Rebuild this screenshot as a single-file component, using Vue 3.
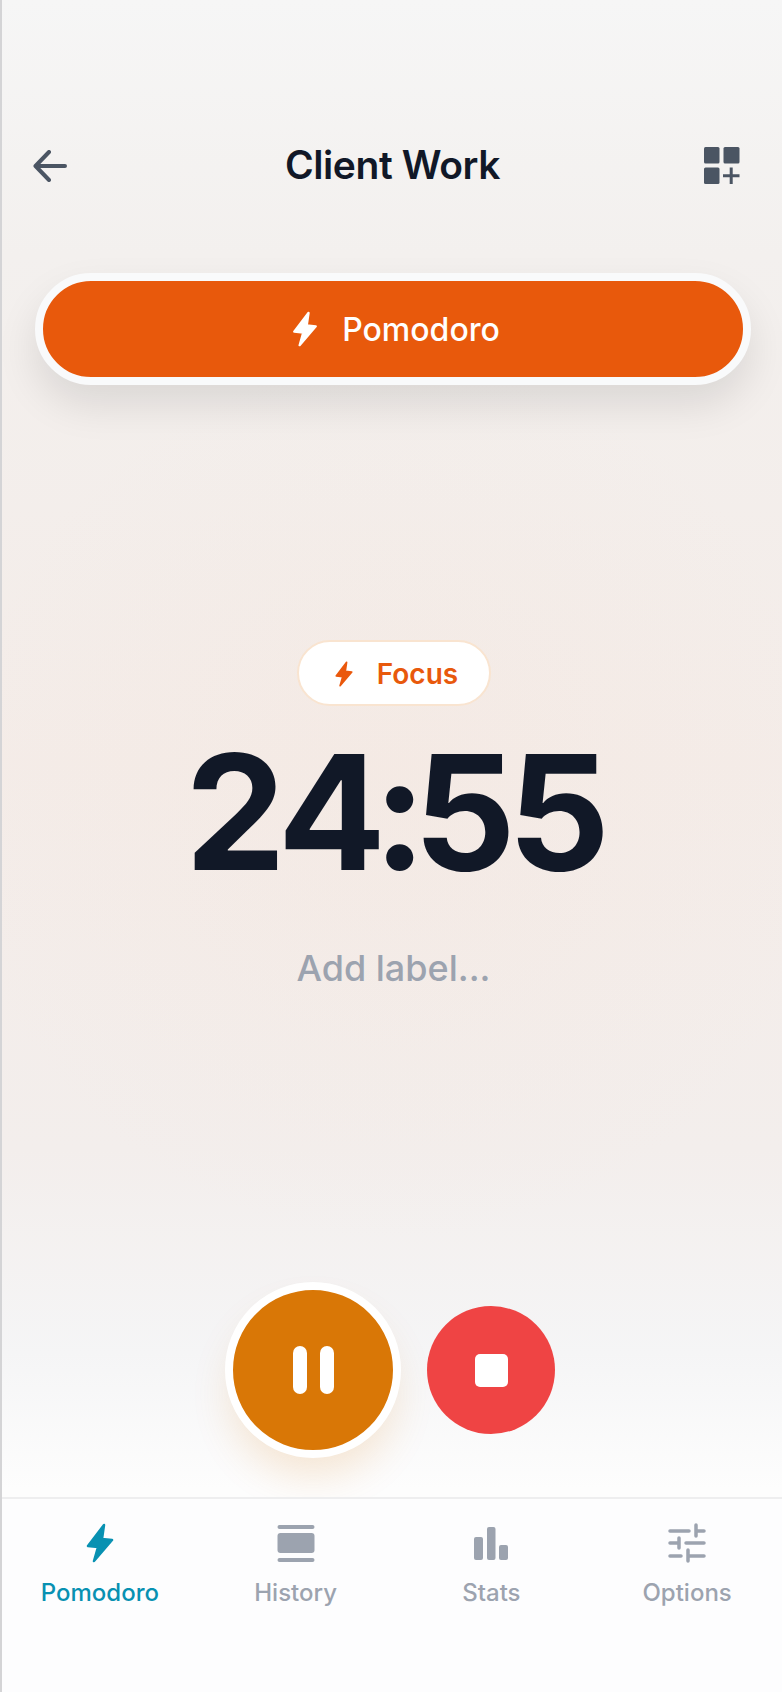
<script setup>
const tabs = [
  { key: 'pomodoro', label: 'Pomodoro' },
  { key: 'history', label: 'History' },
  { key: 'stats', label: 'Stats' },
  { key: 'options', label: 'Options' },
]
</script>

<template>
  <div class="app">
    <header class="topbar">
      <button class="icon-btn back">
        <svg width="34" height="32" viewBox="0 0 34 32" fill="none" stroke="#4b5563" stroke-width="4" stroke-linecap="round" stroke-linejoin="round">
          <path d="M32 16H3M16 2L2.500 16L16 30" />
        </svg>
      </button>
      <h1 class="title">Client Work</h1>
      <button class="icon-btn add">
        <svg width="36" height="38" viewBox="0 0 36 38" fill="#4b5563">
          <rect x="0" y="0" width="15.500" height="16.500" rx="1.500" />
          <rect x="19.500" y="0" width="16" height="16.500" rx="1.500" />
          <rect x="0" y="20.500" width="15.500" height="16.500" rx="1.500" />
          <path d="M19 27.300h6.700V20.500h3v6.800H35.500v3h-6.800V37h-3v-6.700H19z" />
        </svg>
      </button>
    </header>

    <div class="mode-pill">
      <svg class="bolt" width="28" height="36" viewBox="0 0 28 40" fill="#fff" stroke="#fff" stroke-width="2.500" stroke-linejoin="round">
        <path d="M18 2L2 23L12 24L8 38L26 17L16 16Z" />
      </svg>
      <span>Pomodoro</span>
    </div>

    <main class="timer">
      <div class="badge">
        <svg width="20" height="26" viewBox="0 0 28 40" fill="#ea580c" stroke="#ea580c" stroke-width="2.500" stroke-linejoin="round">
          <path d="M18 2L2 23L12 24L8 38L26 17L16 16Z" />
        </svg>
        <span>Focus</span>
      </div>
      <div class="clock">2<span class="tight">4:</span>55</div>
      <div class="label">Add label...</div>
    </main>

    <div class="controls">
      <button class="ctrl pause">
        <span class="bar"></span>
        <span class="bar"></span>
      </button>
      <button class="ctrl stop">
        <span class="square"></span>
      </button>
    </div>

    <nav class="tabbar">
      <div v-for="tab in tabs" :key="tab.key" class="tab" :class="{ active: tab.key === 'pomodoro' }">
        <svg v-if="tab.key === 'pomodoro'" width="28" height="40" viewBox="0 0 28 40" fill="#0891b2" stroke="#0891b2" stroke-width="2.500" stroke-linejoin="round">
          <path d="M18 2L2 23L12 24L8 38L26 17L16 16Z" />
        </svg>
        <svg v-else-if="tab.key === 'history'" width="38" height="40" viewBox="0 0 38 40" fill="#9ca3af">
          <rect x="0.500" y="2" width="37" height="4" rx="2" />
          <rect x="0.500" y="10" width="37" height="20" rx="3" />
          <rect x="0.500" y="35" width="37" height="4" rx="2" />
        </svg>
        <svg v-else-if="tab.key === 'stats'" width="36" height="40" viewBox="0 0 36 40" fill="#9ca3af">
          <rect x="1" y="14" width="9" height="23" rx="2" />
          <rect x="14" y="4" width="8.500" height="33" rx="2" />
          <rect x="26" y="22" width="9" height="15" rx="2" />
        </svg>
        <svg v-else width="38" height="40" viewBox="0 0 38 40" fill="none" stroke="#9ca3af" stroke-width="3.500" stroke-linecap="round">
          <path d="M2 8H21M28 2V13M28 8H36M2 20H11M11 15V25M18 20H36M2 33H13M20 27V38M20 33H36" />
        </svg>
        <span>{{ tab.label }}</span>
      </div>
    </nav>
  </div>
</template>

<style>
html,
body {
  margin: 0;
  background: #fff;
}
</style>

<style scoped>
.app {
  width: 782px;
  height: 1692px;
  box-sizing: border-box;
  border-left: 2px solid #d4d4d6;
  display: flex;
  flex-direction: column;
  overflow: hidden;
  font-family: Inter, 'Liberation Sans', sans-serif;
  background:
    radial-gradient(circle 440px at 392px 800px, rgba(245, 225, 213, 0.22), rgba(245, 225, 213, 0) 100%),
    linear-gradient(180deg, #f6f6f6 0%, #f3f0ee 15%, #f4ece8 45%, #f3eeec 68%, #f5f5f6 80%, #fdfdfd 88%);
}

button {
  border: 0;
  padding: 0;
  background: none;
  font: inherit;
}

.topbar {
  margin-top: 125px;
  height: 80px;
  padding: 0 42px 0 30px;
  display: flex;
  align-items: center;
  justify-content: space-between;
}

.icon-btn {
  display: flex;
  width: 36px;
  justify-content: center;
}

.back {
  margin-top: 2px;
}

.add {
  margin-top: 2px;
}

.title {
  margin: -2px 0 0 13px;
  font-size: 39px;
  font-weight: 600;
  letter-spacing: -0.4px;
  color: #111827;
}

.mode-pill {
  margin: 68px 31px 0 33px;
  height: 96px;
  padding-left: 5px;
  border: 8px solid #f9fafb;
  border-radius: 60px;
  background: #e8590c;
  color: #fff;
  display: flex;
  align-items: center;
  justify-content: center;
  gap: 23px;
  font-size: 32px;
  font-weight: 500;
  box-shadow: 0 20px 40px rgba(0, 0, 0, 0.1);
}

.timer {
  flex: 1;
  padding: 255px 0 0 3px;
  display: flex;
  flex-direction: column;
  align-items: center;
}

.badge {
  box-sizing: border-box;
  width: 194px;
  height: 66px;
  padding: 2px 0 0 5px;
  border: 2px solid #f9e4d0;
  border-radius: 33px;
  background: #fff;
  display: flex;
  align-items: center;
  justify-content: center;
  gap: 23px;
  font-size: 28px;
  font-weight: 600;
  color: #e8590c;
}

.clock {
  margin-top: 11px;
  font-size: 160px;
  line-height: 190px;
  font-weight: 700;
  letter-spacing: -8px;
  color: #111827;
}

.tight {
  letter-spacing: -13px;
}

.label {
  margin-top: 39px;
  font-size: 36px;
  line-height: 44px;
  font-weight: 500;
  color: #9ca3af;
}

.controls {
  display: flex;
  align-items: center;
  justify-content: center;
  gap: 26px;
  padding: 0 4px 39px 0;
}

.ctrl {
  display: flex;
  align-items: center;
  justify-content: center;
  border-radius: 50%;
}

.pause {
  box-sizing: content-box;
  width: 160px;
  height: 160px;
  gap: 13px;
  border: 8px solid #fff;
  background: #d97706;
  box-shadow: 0 24px 40px -6px rgba(217, 119, 6, 0.16);
}

.bar {
  width: 14px;
  height: 48px;
  border-radius: 7px;
  background: #fff;
}

.stop {
  width: 128px;
  height: 128px;
  background: #ef4444;
}

.square {
  width: 33px;
  height: 33px;
  border-radius: 5px;
  background: #fff;
}

.tabbar {
  height: 195px;
  box-sizing: border-box;
  margin-right: -3px;
  border-top: 2px solid #eeeeef;
  background: #fdfdfe;
  display: grid;
  grid-template-columns: repeat(4, 1fr);
  padding-top: 24px;
}

.tab {
  display: flex;
  flex-direction: column;
  align-items: center;
  gap: 15px;
  font-size: 24px;
  line-height: 29px;
  font-weight: 500;
  color: #9ca3af;
}

.tab.active {
  color: #0891b2;
}
</style>
